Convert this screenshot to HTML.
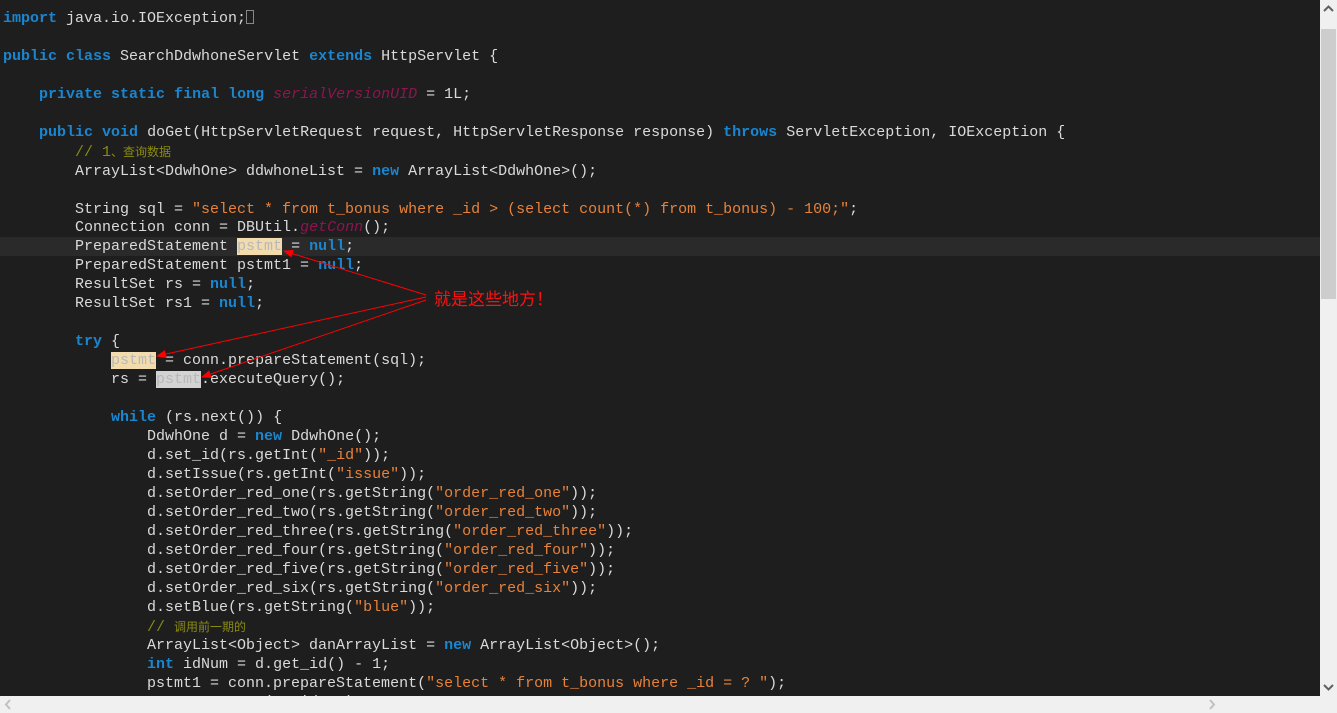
<!DOCTYPE html>
<html><head><meta charset="utf-8"><style>
html,body{margin:0;padding:0;width:1337px;height:713px;overflow:hidden;background:#f0f0f0}
#ed{position:absolute;left:0;top:0;width:1320px;height:696px;background:#1e1e1e;overflow:hidden}
.cur{position:absolute;left:0;top:237px;width:1320px;height:19px;background:#2a2a2a}
pre{position:absolute;left:3px;top:10px;margin:0;font-family:"Liberation Mono","Noto Sans CJK SC",monospace;font-size:15px;line-height:18.95px;color:#dadada;white-space:pre}
.k{color:#1a86d0;font-weight:bold}
.s{color:#e8823a}
.c{color:#8a8a14}
.c .z{font-family:"Noto Sans CJK SC",sans-serif;font-size:12px}
.i{color:#8c1650;font-style:italic}
.h1{background:#f2dcae;color:#b8b8b8}
.h2{background:#d3d3d3;color:#b8b8b8}
.box{display:inline-block;width:8px;height:14px;border:1px solid #888;box-sizing:border-box;vertical-align:-2px}
#vs{position:absolute;left:1320px;top:0;width:17px;height:696px;background:#f0f0f0}
#thumb{position:absolute;left:1321px;top:29px;width:15px;height:270px;background:#cdcdcd}
#hs{position:absolute;left:0;top:696px;width:1337px;height:17px;background:#f0f0f0}
.note{position:absolute;left:434px;top:287px;color:#ff1010;font-family:"Noto Sans CJK SC",sans-serif;font-size:17px;line-height:22px}
</style></head><body>
<div id="ed"><div class="cur"></div>
<pre><span class="k">import</span> java.io.IOException;<span class="box"></span>

<span class="k">public</span> <span class="k">class</span> SearchDdwhoneServlet <span class="k">extends</span> HttpServlet {

    <span class="k">private</span> <span class="k">static</span> <span class="k">final</span> <span class="k">long</span> <span class="i">serialVersionUID</span> = 1L;

    <span class="k">public</span> <span class="k">void</span> doGet(HttpServletRequest request, HttpServletResponse response) <span class="k">throws</span> ServletException, IOException {
        <span class="c">// 1<span class="z">、查询数据</span></span>
        ArrayList&lt;DdwhOne&gt; ddwhoneList = <span class="k">new</span> ArrayList&lt;DdwhOne&gt;();

        String sql = <span class="s">"select * from t_bonus where _id &gt; (select count(*) from t_bonus) - 100;"</span>;
        Connection conn = DBUtil.<span class="i">getConn</span>();
        PreparedStatement <span class="h1">pstmt</span> = <span class="k">null</span>;
        PreparedStatement pstmt1 = <span class="k">null</span>;
        ResultSet rs = <span class="k">null</span>;
        ResultSet rs1 = <span class="k">null</span>;

        <span class="k">try</span> {
            <span class="h1">pstmt</span> = conn.prepareStatement(sql);
            rs = <span class="h2">pstmt</span>.executeQuery();

            <span class="k">while</span> (rs.next()) {
                DdwhOne d = <span class="k">new</span> DdwhOne();
                d.set_id(rs.getInt(<span class="s">"_id"</span>));
                d.setIssue(rs.getInt(<span class="s">"issue"</span>));
                d.setOrder_red_one(rs.getString(<span class="s">"order_red_one"</span>));
                d.setOrder_red_two(rs.getString(<span class="s">"order_red_two"</span>));
                d.setOrder_red_three(rs.getString(<span class="s">"order_red_three"</span>));
                d.setOrder_red_four(rs.getString(<span class="s">"order_red_four"</span>));
                d.setOrder_red_five(rs.getString(<span class="s">"order_red_five"</span>));
                d.setOrder_red_six(rs.getString(<span class="s">"order_red_six"</span>));
                d.setBlue(rs.getString(<span class="s">"blue"</span>));
                <span class="c">// <span class="z">调用前一期的</span></span>
                ArrayList&lt;Object&gt; danArrayList = <span class="k">new</span> ArrayList&lt;Object&gt;();
                <span class="k">int</span> idNum = d.get_id() - 1;
                pstmt1 = conn.prepareStatement(<span class="s">"select * from t_bonus where _id = ? "</span>);
                pstmt1.setInt(1, idNum);</pre>
<svg width="1320" height="696" style="position:absolute;left:0;top:0">
<defs><marker id="a" markerWidth="10" markerHeight="8" refX="9" refY="4" orient="auto" markerUnits="userSpaceOnUse"><path d="M0,0 L10,4 L0,8 z" fill="#ff0000"/></marker></defs>
<g stroke="#ff0000" stroke-width="1" fill="none">
<line x1="426" y1="295" x2="284" y2="251" marker-end="url(#a)"/>
<line x1="426" y1="297" x2="157" y2="356" marker-end="url(#a)"/>
<line x1="426" y1="300" x2="202" y2="377" marker-end="url(#a)"/>
</g></svg>
<div class="note">就是这些地方！</div>
</div>
<div id="vs"><svg width="17" height="17" style="position:absolute;left:0;top:0"><path d="M4,11 L8.5,6.5 L13,11" stroke="#606060" stroke-width="2" fill="none"/></svg>
<svg width="17" height="17" style="position:absolute;left:0;top:679px"><path d="M4,6 L8.5,10.5 L13,6" stroke="#606060" stroke-width="2" fill="none"/></svg></div>
<div id="thumb"></div>
<div id="hs"><svg width="17" height="17" style="position:absolute;left:0;top:0"><path d="M10,4 L6,8.5 L10,13" stroke="#c0c0c0" stroke-width="2" fill="none"/></svg>
<svg width="17" height="17" style="position:absolute;left:1203px;top:0"><path d="M7,4 L11,8.5 L7,13" stroke="#c0c0c0" stroke-width="2" fill="none"/></svg></div>
</body></html>
